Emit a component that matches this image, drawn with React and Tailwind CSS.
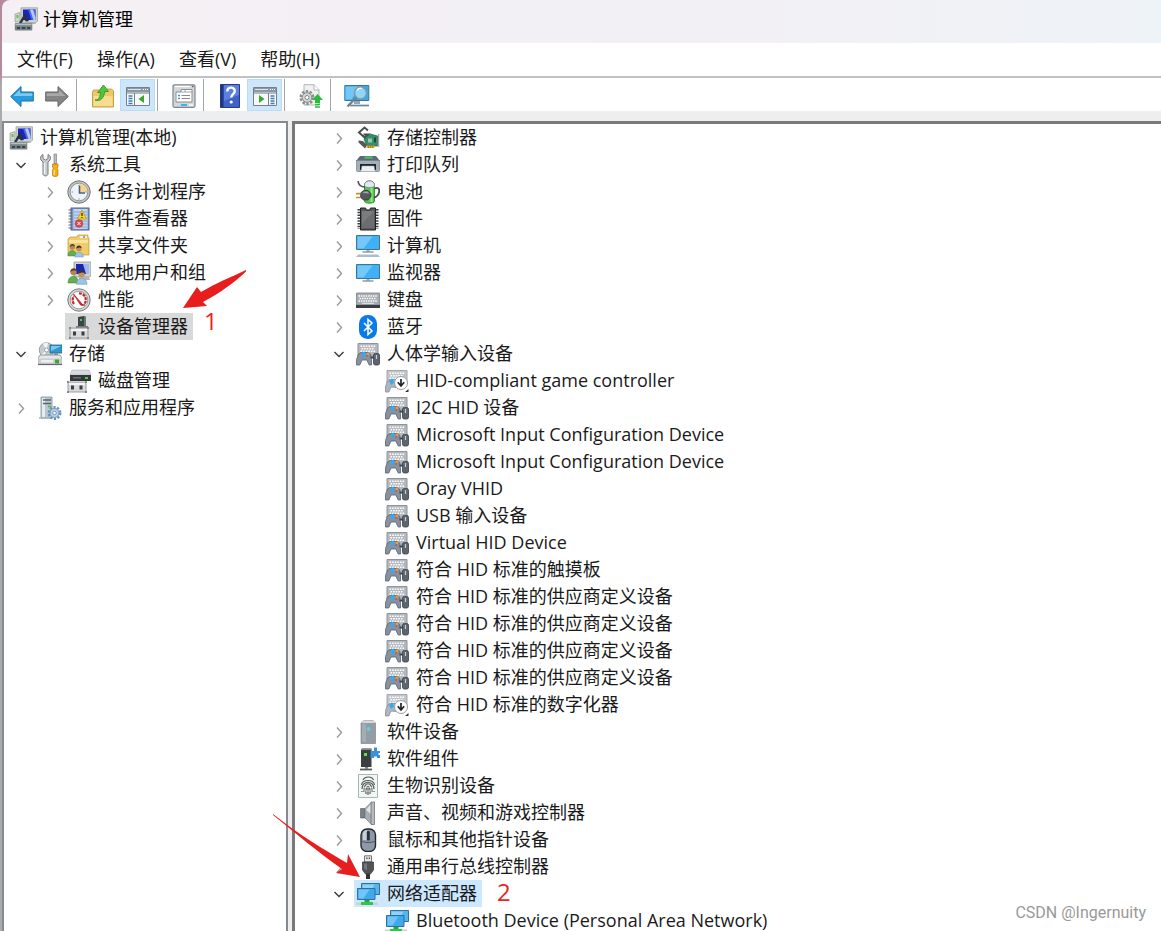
import React from "react";

function Svg({ children, size = "size-6", box = "0 0 24 24" }) {
  return (
    <svg viewBox={box} className={size + " shrink-0"} fill="none" aria-hidden="true">
      {children}
    </svg>
  );
}

/* ---------- tree icons ---------- */

function ManagementIcon() {
  return (
    <Svg>
      <path d="M7 .8h16.500v13.500L21 16H9L7 14z" fill="#cfd2cc" stroke="#979a95" strokeWidth=".7" />
      <path d="M9 2.500h12.500v10.500H9z" fill="#1625c4" />
      <path d="M14 2.500h7.500v10.500h-4z" fill="#4a68e2" />
      <path d="M16 2.500h3l2.500 8v2.500h-2z" fill="#b9c9fb" />
      <path d="M11 15h9l2 2H10z" fill="#aeb3ae" />
      <path d="M1 7l5-1.500V15H1z" fill="#ccd5ce" stroke="#8b958c" strokeWidth=".6" />
      <path d="M2.500 8h2v3h-2z" fill="#62c93a" />
      <path d="M10.500 6.500c2 0 3 2 2 3.500l2.500 4-3 .5-2-2-2.500 3.500H5l3.500-6z" fill="#2a3046" />
      <rect x=".8" y="16" width="17.500" height="7.500" rx="1" fill="#788485" />
      <path d="M1.500 16.700h16v1.500h-16z" fill="#b3c0c0" />
      <path d="M3 20h3v2H3zM7.800 20h3.500v2H7.800zM13.200 20h3v2h-3z" fill="#37424a" />
    </Svg>
  );
}

function ToolsIcon() {
  return (
    <Svg>
      <path d="M5 1.500C2.500 2.500 2 5 3 7l2 2v12c0 2.500 5 2.500 5 0V9l2-2c1-2 .5-4.500-2-5.500v4L7.500 7 5 5.500z" fill="#c8cbcd" stroke="#777b7e" />
      <path d="M6.500 10v11" stroke="#f4f5f5" strokeWidth="1.300" />
      <path d="M16 1h2.500v10H16z" fill="#b9bcc0" stroke="#707478" strokeWidth=".6" />
      <path d="M14.500 11h5.500v3l-1 1 1 2v5c0 2-5.500 2-5.500 0v-5l1-2-1-1z" fill="#f3ae18" stroke="#b97607" strokeWidth=".7" />
      <path d="M16.300 17v5" stroke="#ffe27a" strokeWidth="1.300" />
    </Svg>
  );
}

function ClockIcon() {
  return (
    <Svg>
      <circle cx="12" cy="12" r="11.200" fill="#bfc3c4" stroke="#73777a" />
      <circle cx="12" cy="12" r="8.800" fill="#eef4f9" stroke="#7f8487" strokeWidth=".8" />
      <path d="M12 12V3.500A8.500 8.500 0 0 1 20.500 12z" fill="#f6d48d" />
      <path d="M12 5v1M12 18.500v1M4.800 12h1M18.500 12h1" stroke="#667" />
      <path d="M12.500 6v7H18" stroke="#45617e" strokeWidth="1.600" />
    </Svg>
  );
}

function EventIcon() {
  return (
    <Svg>
      <rect x="4" y="1" width="18" height="22" fill="#7f9ccb" stroke="#4c5f92" />
      <rect x="6.500" y="2" width="14" height="20" fill="#c3d5ee" />
      <path d="M7 5h13M7 8h13M7 11h13M7 14h13M7 17h13M7 20h13" stroke="#8aa3d2" />
      <path d="M1.500 3h4M1.500 6h4M1.500 9h4M1.500 12h4M1.500 15h4M1.500 18h4M1.500 21h4" stroke="#5d6573" strokeWidth="1.200" />
      <path d="M15 3l4.500 9h-9z" fill="#f7d51d" stroke="#b79209" strokeWidth=".7" />
      <path d="M15 6v3M15 10v1" stroke="#222" strokeWidth="1.200" />
      <circle cx="12" cy="16.500" r="3.800" fill="#dd4a4c" stroke="#b33" strokeWidth=".6" />
      <path d="M10.500 15l3 3M13.500 15l-3 3" stroke="#fff" />
    </Svg>
  );
}

function People() {
  return (
    <g>
      <circle cx="6.500" cy="11" r="3.200" fill="#b98454" />
      <path d="M3.300 11c0-5 6.500-5 6.500-.5-2-1.500-4-1-6.500.5z" fill="#594231" />
      <path d="M1 22c0-9 10.500-9 10.500 0z" fill="#63ad55" stroke="#3c7a36" strokeWidth=".5" />
      <circle cx="14.500" cy="13" r="3.200" fill="#c4905f" />
      <path d="M11.300 13c0-5 6.500-5 6.500-.5-2-1.500-4-1-6.500.5z" fill="#3a2c24" />
      <path d="M9.500 23.300c0-8 10.500-8 10.500 0z" fill="#9cc4e4" stroke="#5c88ad" strokeWidth=".5" />
    </g>
  );
}

function SharedFolderIcon() {
  return (
    <Svg>
      <path d="M1 5l2-2h7l1-2h10v3h1v17H1z" fill="#f0cb6a" stroke="#c2973a" strokeWidth=".7" />
      <path d="M13 2.300h7v1.500h-7z" fill="#fff" />
      <path d="M16 2.300h2v1.500h-2z" fill="#4b8fd1" />
      <path d="M2 6h19v3H2z" fill="#fae3a0" />
      <g transform="translate(0 4) scale(.82)"><People /></g>
    </Svg>
  );
}

function UsersIcon() {
  return (
    <Svg>
      <path d="M7 1h17v14l-2 1H7z" fill="#cfd2cd" stroke="#8d918c" strokeWidth=".7" />
      <path d="M9 3h13v10H9z" fill="#1726b5" />
      <path d="M16 3h6v10h-3z" fill="#9fb7f6" />
      <path d="M12 16h10l1 3H12z" fill="#b4b8b3" />
      <People />
    </Svg>
  );
}

function PerformanceIcon() {
  return (
    <Svg>
      <circle cx="12" cy="12" r="11.200" fill="#d4d6d6" stroke="#777b7d" />
      <circle cx="12" cy="12" r="8.800" fill="#fbfbfb" stroke="#85898b" strokeWidth=".8" />
      <path d="M7 16A6.500 6.500 0 0 1 7 8M12 5.300a6.500 6.500 0 0 1 5 11" stroke="#c9252b" strokeWidth="2.200" strokeDasharray="3 .8" />
      <path d="M6.500 6l9.500 11-2.500 0z" fill="#d3202a" stroke="#ab1119" strokeWidth=".6" />
      <path d="M14 17h4" stroke="#c9252b" strokeWidth="1.500" />
    </Svg>
  );
}

function PlugBase() {
  return (
    <>
      <rect x="3" y="13" width="18" height="10" fill="#d9dadb" stroke="#9b9da0" />
      <path d="M4 14h16v2H4z" fill="#f2f2f2" />
      <path d="M6 16.500h3v4H6zM14.500 16.500h3v4h-3z" fill="#3b3e42" />
      <path d="M2 12h2v2H2zM20 12h2v2h-2zM2 22h2v2H2zM20 22h2v2h-2z" fill="#85888b" />
    </>
  );
}

function DeviceManagerIcon() {
  return (
    <Svg>
      <path d="M11 2l6-1 2 1v9h-8z" fill="#3e4348" />
      <path d="M17 1l2 1v9h-2z" fill="#6e7479" />
      <path d="M13 4h2v2h-2z" fill="#4fcf3b" />
      <path d="M9 11h12v2H9z" fill="#75797d" />
      <PlugBase />
    </Svg>
  );
}

function StorageIcon() {
  return (
    <Svg>
      <circle cx="8.500" cy="8" r="7.300" fill="#c4cbd0" stroke="#858e94" strokeWidth=".8" />
      <path d="M8.500 8L5 1.700A7 7 0 0 1 10 1z" fill="#f0f6f8" />
      <path d="M8.500 8L3 13a7 7 0 0 0 3 2z" fill="#f0f6f8" />
      <circle cx="8.500" cy="8" r="2" fill="#fff" stroke="#7f8b92" strokeWidth=".7" />
      <path d="M12 3h12v8H12z" fill="#3296cf" stroke="#1d668f" strokeWidth=".8" />
      <path d="M13 4h10l-10 5z" fill="#7cc8f2" />
      <path d="M16 11h4v2h-4z" fill="#8b959b" />
      <path d="M2 13h20l2 3v6H0v-6z" fill="#e4e7e8" stroke="#74797d" strokeWidth=".7" />
      <path d="M.5 16.500h23v6H.5z" fill="#c9cdcf" />
      <path d="M3 18h12v2.500H3z" fill="#eceeef" />
      <path d="M17 17.500h4v4h-4z" fill="#42a631" />
      <path d="M0 22.500h24" stroke="#63686b" strokeWidth="1.200" />
    </Svg>
  );
}

function DiskIcon() {
  return (
    <Svg>
      <path d="M5 1h17l2 5H3z" fill="#d8dbdd" stroke="#aeb2b5" strokeWidth=".6" />
      <path d="M3 6h21v6H3z" fill="#34383c" />
      <path d="M6 8h8v1.500H6z" fill="#6a6f74" />
      <path d="M18 8h3v2h-3z" fill="#4cce35" />
      <g transform="translate(-2 0)"><PlugBase /></g>
    </Svg>
  );
}

function ServicesIcon() {
  return (
    <Svg>
      <path d="M3 1h11v21H3z" fill="#bac7cf" stroke="#84929b" strokeWidth=".8" />
      <path d="M4 2h3v19H4z" fill="#e5ecf0" />
      <path d="M5 4h8M5 7.500h8" stroke="#58666f" strokeWidth="1.400" />
      <path d="M10 10.500h3" stroke="#53b744" strokeWidth="1.600" />
      <path d="M1 22h12" stroke="#a7b4bb" strokeWidth="1.500" />
      <circle cx="16.500" cy="17" r="5.800" stroke="#6993b8" strokeWidth="2.400" strokeDasharray="2.200 1.450" />
      <circle cx="16.500" cy="17" r="4.500" fill="#b9d2e7" stroke="#6d97bb" />
      <circle cx="16.500" cy="17" r="1.800" fill="#fff" stroke="#5c86ab" strokeWidth=".8" />
    </Svg>
  );
}

function StorageControllerIcon() {
  return (
    <Svg>
      <path d="M12 4.500L8.500 1.500 3 6.500l5.500 5L12 8.500H7.500" stroke="#4b4e50" strokeWidth="2" />
      <path d="M2.500 14.500l4.500.5 4 4-2 3.500-6.500-6z" fill="#55595b" />
      <path d="M8 13l6-5 7.500 2v10H11z" fill="#35906a" stroke="#1b5a3f" strokeWidth=".7" />
      <path d="M12 12.500h4v4h-4z" fill="#9cc5ad" />
      <path d="M18 11.500h2v5h-2z" fill="#174c37" />
      <path d="M22.500 8v13" stroke="#a4a8aa" strokeWidth="1.400" />
      <path d="M10.500 19.500h8V22h-8z" fill="#e0a52a" />
      <path d="M12.500 19.500V22M14.500 19.500V22M16.500 19.500V22" stroke="#8c6411" strokeWidth=".6" />
    </Svg>
  );
}

function PrinterIcon() {
  return (
    <Svg>
      <path d="M4 3h16l4 5H0z" fill="#606a72" />
      <path d="M9 3.500h7l1 2H8z" fill="#4cc46f" />
      <path d="M0 7.500h24v10l-1.500 1h-21L0 17.500z" fill="#a4b0b9" stroke="#737e87" strokeWidth=".7" />
      <path d="M4 11h16v6H4z" fill="#20272c" />
      <path d="M6 13h12l1 5.500H5z" fill="#edf0f2" stroke="#a5abb0" strokeWidth=".5" />
    </Svg>
  );
}

function BatteryIcon() {
  return (
    <Svg>
      <path d="M8.500 5c0-5.500 10-5.500 10 0v16c0 3-10 3-10 0z" fill="#50c64a" stroke="#2c7a2d" strokeWidth=".8" />
      <path d="M8.500 5c0-5.500 10-5.500 10 0v1.500c-3 1.500-7 1.500-10 0z" fill="#e3e6f3" stroke="#77808a" strokeWidth=".7" />
      <path d="M15.500 8v14" stroke="#93e886" strokeWidth="2" />
      <path d="M18.500 8.500c5-2 5 2 4.500 4s-2.500 5-5 5" stroke="#43484a" strokeWidth="1.800" />
      <path d="M2 1c.5 4 3 6 7 6" stroke="#4a4e50" strokeWidth="1.600" />
      <path d="M4.500 13l3-2.500h4.500l3 3v3L12 20H7.500l-3-2.500z" fill="#55595c" stroke="#222" strokeWidth=".6" />
      <path d="M6.500 13l2-1.500h3l2 2z" fill="#a2a8ac" />
      <path d="M0 13.700h4.500M0 17.500h4.500" stroke="#c09238" strokeWidth="1.700" />
    </Svg>
  );
}

function FirmwareIcon() {
  return (
    <Svg>
      <path d="M3 2v20M21 2v20" stroke="#3b3d3f" strokeWidth="3" strokeDasharray="1.500 1.300" />
      <path d="M4.500 1h5l1 2h3l1-2h5v22h-15z" fill="#58595a" stroke="#1f2021" />
      <path d="M6 4h12v17H6z" fill="#6c6d6e" />
      <path d="M6 4h12L6 17z" fill="#7b7c7d" />
    </Svg>
  );
}

function Screen({ base }) {
  return (
    <>
      <path d="M.5 1.500h23v14H.5z" fill="#41b0f5" stroke="#3c7797" />
      <path d="M1.500 2.500h15l-9 12h-6z" fill="#74c8fa" />
      <path d="M10.500 16h3v2h-3z" fill="#9badb8" />
      <path d="M6.500 18h11" stroke="#7f97a5" strokeWidth="1.400" />
      {base && <path d="M2 20.500h20l2 2.500H0z" fill="#aebdca" />}
    </>
  );
}

const ComputerIcon = () => <Svg><Screen base /></Svg>;
const MonitorIcon = () => <Svg><g transform="translate(0 2)"><Screen /></g></Svg>;

function KeyboardIcon() {
  return (
    <Svg>
      <path d="M.5 5h23v12H.5z" fill="#a8adb3" stroke="#7a8087" strokeWidth=".8" />
      <path d="M2.500 8h19M3.500 10.500h17M2.500 13h19" stroke="#fff" strokeWidth="1.400" strokeDasharray="1.500 .9" />
      <path d="M6 15.300h12" stroke="#e9ebed" />
      <path d="M0 17h24v3H0z" fill="#393d42" />
    </Svg>
  );
}

function BluetoothIcon() {
  return (
    <Svg>
      <rect x="3" y="0" width="18" height="24" rx="8.500" fill="#0a7bea" />
      <path d="M8 8l8 8-4 3.500v-15L16 8l-8 8" stroke="#fff" strokeWidth="1.500" />
    </Svg>
  );
}

function HidBase() {
  return (
    <>
      <path d="M2 1.500h20V14H2z" fill="#b4b9bf" stroke="#8d949b" />
      <path d="M4.500 4.300h15M5.500 6.800h13M4.500 9.300h15" stroke="#fff" strokeWidth="1.400" strokeDasharray="1.600 1" />
    </>
  );
}

function HidIcon() {
  return (
    <Svg>
      <HidBase />
      <path d="M2.500 12L5 10.500h7l2.500 1.500 1 5.500V23h-2.300l-2.400-5H6l-2.200 5H.5v-5.500z" fill="#8791a0" stroke="#59636f" strokeWidth=".8" />
      <path d="M5 11l3.500-1.500L10.500 13 7 15.500z" fill="#3ea6ea" />
      <circle cx="12" cy="11.800" r="1.300" fill="#f0a02c" />
      <circle cx="11.200" cy="14" r="1" fill="#d6543a" />
      <path d="M14.500 15.500h3.500" stroke="#3b444c" strokeWidth="2" />
      <rect x="17.500" y="11.500" width="6" height="11.500" rx="1.800" fill="#5c6670" stroke="#3a4249" strokeWidth=".8" />
      <path d="M20.500 13v4" stroke="#c7ced4" strokeWidth="1.200" />
    </Svg>
  );
}

function HidDisabledIcon() {
  return (
    <Svg>
      <g opacity=".8">
        <HidBase />
        <path d="M2.500 12L5 10.500h6v8L6 18l-2.200 5H.5v-5.500z" fill="#9ba4b0" stroke="#6b7580" strokeWidth=".8" />
      </g>
      <path d="M4 12l4-2.500 1 4-3 2.500z" fill="#3ea6ea" />
      <path d="M20 23l3.500-3v3z" fill="#333" />
      <circle cx="16" cy="14" r="6.500" fill="#fff" stroke="#999c9f" />
      <path d="M16 10v6.500M12.800 13.300l3.200 3.700 3.200-3.700" stroke="#222" strokeWidth="1.700" />
    </Svg>
  );
}

function SoftwareDeviceIcon() {
  return (
    <Svg>
      <path d="M5 3l3-2.500h9L19.500 3v20.500H5z" fill="#959da4" stroke="#747c83" strokeWidth=".6" />
      <path d="M5 3l3-2.500h9L19.500 3z" fill="#d5dade" />
      <path d="M6 4h4v18H6z" fill="#a5adb4" />
      <circle cx="12.500" cy="9" r="2" fill="#57d4e2" />
    </Svg>
  );
}

function SoftwareComponentIcon() {
  return (
    <Svg>
      <path d="M5 3l1-1.500h9.500V20H5z" fill="#3b3f42" />
      <path d="M5 3l1-1.500h9.500V3z" fill="#888d91" />
      <path d="M8 6h3v3H8z" fill="#5fe34b" />
      <path d="M4 22.500h12" stroke="#565b5f" strokeWidth="1.800" />
      <path d="M10.500 20v2" stroke="#888" strokeWidth="3" />
      <path d="M14.500 4H18V.5h3V4h3v2h-1.500v2H24v3h-3V9.500h-3V11h-3.500z" fill="#3a92d8" />
    </Svg>
  );
}

function FingerprintIcon() {
  return (
    <Svg>
      <path d="M2.500.5h19v23h-19z" fill="#f2f6f4" stroke="#a5b9b1" />
      <path d="M7 6c2-4 9-4 10.500 0M5.500 11c1-6 12-6 13 0M6 15c0-9 12-9 12 0M8 18c-1-11 9-11 8 0M10 20c-1-10 5-10 4 0M12 12v9M6 18v-1M18 18v-1" stroke="#52595a" strokeWidth="1.200" />
      <path d="M7 13.500h10M8 17h8" stroke="#f2f6f4" strokeWidth=".6" />
    </Svg>
  );
}

function SpeakerIcon() {
  return (
    <Svg>
      <path d="M4.500 7.500H9v9.500H4.500z" fill="#7b8084" stroke="#55595c" strokeWidth=".6" />
      <path d="M9 7.500L15.500 1v22.500L9 17z" fill="#a9aeb2" stroke="#777c80" strokeWidth=".7" />
      <path d="M10 9l5-6v10z" fill="#e2e5e7" />
      <path d="M15 1h3.500v22.500H15z" fill="#b5babd" stroke="#63686c" strokeWidth=".7" />
    </Svg>
  );
}

function MouseIcon() {
  return (
    <Svg>
      <rect x="5" y="1" width="14.500" height="22.500" rx="6" fill="#8d99a7" stroke="#22272c" strokeWidth="1.400" />
      <path d="M7 6c0-4 4-4 4-4v10H7z" fill="#c8d1da" />
      <path d="M5 13c4 2 10 2 14.500 0" stroke="#4b545e" />
      <rect x="10.800" y="3" width="3" height="9.500" rx="1.300" fill="#2c3136" />
    </Svg>
  );
}

function UsbIcon() {
  return (
    <Svg>
      <path d="M8.500.8h7V7h-7z" fill="#e4e4e4" stroke="#777" />
      <path d="M10.300 2.500h1.200V4h-1.200zM12.800 2.500H14V4h-1.200z" fill="#444" />
      <path d="M6.500 7h11v8l-3 4h-5l-3-4z" fill="#515355" stroke="#333" strokeWidth=".7" />
      <path d="M8 8.500h3v7l-3-2z" fill="#74777a" />
      <path d="M10 19h4v5h-4z" fill="#2f3133" />
    </Svg>
  );
}

function NetworkIcon() {
  return (
    <Svg>
      <path d="M5.500 1.500h18v11h-18z" fill="#55b5ef" stroke="#2f7197" />
      <path d="M6.500 2.500h12l-3 6h-9z" fill="#8ed2fa" />
      <path d="M1.500 6.500H19v11H1.500z" fill="#3fa9ed" stroke="#2f7197" />
      <path d="M2.500 7.500h11l-6 9h-5z" fill="#72c5f8" />
      <path d="M8.500 18h5v2.500h-5z" fill="#2aa341" />
      <path d="M0 20.500h22v2.500H0z" fill="#c9d2d4" />
      <path d="M5 20h12v3H5z" fill="#38c14b" />
    </Svg>
  );
}

/* ---------- toolbar icons ---------- */

function ArrowIcon({ forward }) {
  return (
    <Svg>
      {forward ? (
        <>
          <path d="M23.300 12.500L13 2.500V8H.7v9H13v5.500z" fill="#858585" stroke="#666" strokeLinejoin="round" />
          <path d="M14 5.500l6.500 6.500H1.700V9.300H14z" fill="#a8a8a8" />
        </>
      ) : (
        <>
          <path d="M.7 12.500L11 2.500V8h12.300v9H11v5.500z" fill="#279de0" stroke="#1b6faa" strokeLinejoin="round" />
          <path d="M10 5.500L3.500 12h18.800V9.300H10z" fill="#7bcbf5" />
        </>
      )}
    </Svg>
  );
}

function FolderUpIcon() {
  return (
    <Svg>
      <path d="M1.500 8l1-2h6l1 2h5l1-3h5l2 2v16h-21z" fill="#eec867" stroke="#b98f35" strokeWidth=".8" />
      <path d="M2.500 12h19v10h-19z" fill="#f8dd8f" />
      <path d="M4 16c4 0 5-3 5.500-7.500H6.500L12.500 1l5 6.500h-3.800C13 14 9.500 18 4 16z" fill="#4cc63a" stroke="#2b8f22" strokeWidth=".8" />
    </Svg>
  );
}

function PaneIcon({ right }) {
  return (
    <Svg>
      <path d="M.5 3.500h23v18H.5z" fill="#f7f8f9" stroke="#76808b" />
      <path d="M1 4h22v4H1z" fill="#8d98a5" />
      <path d="M2 5.500h13" stroke="#dfe4e9" />
      <path d="M17 5.500h5" stroke="#fff" strokeDasharray="1 1" />
      <path d="M1 9h22" stroke="#717b86" />
      {right ? (
        <>
          <path d="M15.500 9v12" stroke="#76808b" />
          <path d="M17.500 12h4M17.500 14.500h4M17.500 17h4M17.500 19.500h4" stroke="#3e7cb2" strokeWidth="1.300" />
          <path d="M6 11l5.500 4L6 19z" fill="#37a829" />
        </>
      ) : (
        <>
          <path d="M8.500 9v12" stroke="#76808b" />
          <path d="M2.500 12h4M2.500 14.500h4M2.500 17h4M2.500 19.500h4" stroke="#3e7cb2" strokeWidth="1.300" />
          <path d="M18 11l-5.500 4 5.500 4z" fill="#37a829" />
        </>
      )}
    </Svg>
  );
}

function PropertiesIcon() {
  return (
    <Svg>
      <rect x="1" y=".8" width="22" height="22.500" rx="1.500" fill="#d4d7da" stroke="#7f858b" strokeWidth="1.200" />
      <path d="M3 2.500h15" stroke="#fff" strokeWidth="1.300" />
      <path d="M20 2.500h1.500" stroke="#666" strokeWidth="1.300" />
      <path d="M4 8h5V5.500h11V18H4z" fill="#fff" stroke="#7d848b" strokeWidth=".9" />
      <path d="M9 8h4V5.500M13 8h7" stroke="#8a9097" strokeWidth=".8" />
      <path d="M6 11.500h2M6 14.500h2" stroke="#379ad1" strokeWidth="1.500" />
      <path d="M9.500 11.500H18M9.500 14.500H18" stroke="#858b91" strokeWidth="1.200" />
      <path d="M9 20h6v2H9z" fill="#3fb3e5" />
      <path d="M17 20h4v2h-4z" fill="#f1f2f3" />
    </Svg>
  );
}

function HelpIcon() {
  return (
    <Svg>
      <path d="M2.500.5h19v23h-19z" fill="#3f62c8" stroke="#243b86" />
      <path d="M3 1h2.500v22H3z" fill="#1e3680" />
      <path d="M6 1h15v10L6 17z" fill="#5a7fdd" />
      <path d="M9.300 7.500c0-5.200 7.500-4.800 7.500-.6 0 3.300-3.600 3.200-3.600 6.700" stroke="#fff" strokeWidth="2.400" />
      <circle cx="13.200" cy="18" r="1.600" fill="#fff" />
    </Svg>
  );
}

function UpdateDriverIcon() {
  return (
    <Svg>
      <path d="M5 .7h10l5 5V21H5z" fill="#f1f1f1" stroke="#adadad" strokeWidth=".9" />
      <path d="M15 .7V6h5" fill="#fff" stroke="#adadad" strokeWidth=".9" />
      <circle cx="8" cy="13.500" r="6.300" stroke="#8b8e90" strokeWidth="2.400" strokeDasharray="2.500 1.450" />
      <circle cx="8" cy="13.500" r="4.800" fill="#d2d4d5" stroke="#85898b" />
      <circle cx="8" cy="13.500" r="2" fill="#fff" stroke="#85898b" />
      <path d="M18.500 10l5.500 6h-3v3h-5v-3h-3z" fill="#29bb3a" />
      <path d="M16 20.500h5M16 23h5" stroke="#29bb3a" strokeWidth="1.500" />
    </Svg>
  );
}

function ScanIcon() {
  return (
    <Svg size="h-6 w-[26px]" box="0 0 26 24">
      <path d="M.8 1.500h24v15H.8z" fill="#3ba8e8" stroke="#2c7ba6" />
      <path d="M1.500 2.500h14l-8 13h-6z" fill="#72c7f6" />
      <path d="M10 17h6v3h-6z" fill="#95a8b3" />
      <path d="M6 21.500h19" stroke="#6e8796" strokeWidth="1.700" />
      <circle cx="16.500" cy="9" r="6" fill="#a5dcf8" fillOpacity=".85" stroke="#8297a4" strokeWidth="1.500" />
      <path d="M13 6.500c1-2 3-3 5-2" stroke="#fff" strokeWidth="1.300" />
      <path d="M12.300 13.500L3.500 22.500" stroke="#71828c" strokeWidth="2.400" />
    </Svg>
  );
}

/* ---------- data ---------- */

const consoleTree = {
  label: "计算机管理(本地)",
  icon: ManagementIcon,
  children: [
    {
      label: "系统工具",
      icon: ToolsIcon,
      open: true,
      children: [
        { label: "任务计划程序", icon: ClockIcon, open: false },
        { label: "事件查看器", icon: EventIcon, open: false },
        { label: "共享文件夹", icon: SharedFolderIcon, open: false },
        { label: "本地用户和组", icon: UsersIcon, open: false },
        { label: "性能", icon: PerformanceIcon, open: false },
        { label: "设备管理器", icon: DeviceManagerIcon, tone: "bg-[#d9d9d9]" },
      ],
    },
    {
      label: "存储",
      icon: StorageIcon,
      open: true,
      children: [{ label: "磁盘管理", icon: DiskIcon }],
    },
    { label: "服务和应用程序", icon: ServicesIcon, open: false },
  ],
};

const devices = [
  { label: "存储控制器", icon: StorageControllerIcon, open: false },
  { label: "打印队列", icon: PrinterIcon, open: false },
  { label: "电池", icon: BatteryIcon, open: false },
  { label: "固件", icon: FirmwareIcon, open: false },
  { label: "计算机", icon: ComputerIcon, open: false },
  { label: "监视器", icon: MonitorIcon, open: false },
  { label: "键盘", icon: KeyboardIcon, open: false },
  { label: "蓝牙", icon: BluetoothIcon, open: false },
  {
    label: "人体学输入设备",
    icon: HidIcon,
    open: true,
    children: [
      { label: "HID-compliant game controller", icon: HidDisabledIcon },
      { label: "I2C HID 设备", icon: HidIcon },
      { label: "Microsoft Input Configuration Device", icon: HidIcon },
      { label: "Microsoft Input Configuration Device", icon: HidIcon },
      { label: "Oray VHID", icon: HidIcon },
      { label: "USB 输入设备", icon: HidIcon },
      { label: "Virtual HID Device", icon: HidIcon },
      { label: "符合 HID 标准的触摸板", icon: HidIcon },
      { label: "符合 HID 标准的供应商定义设备", icon: HidIcon },
      { label: "符合 HID 标准的供应商定义设备", icon: HidIcon },
      { label: "符合 HID 标准的供应商定义设备", icon: HidIcon },
      { label: "符合 HID 标准的供应商定义设备", icon: HidIcon },
      { label: "符合 HID 标准的数字化器", icon: HidDisabledIcon },
    ],
  },
  { label: "软件设备", icon: SoftwareDeviceIcon, open: false },
  { label: "软件组件", icon: SoftwareComponentIcon, open: false },
  { label: "生物识别设备", icon: FingerprintIcon, open: false },
  { label: "声音、视频和游戏控制器", icon: SpeakerIcon, open: false },
  { label: "鼠标和其他指针设备", icon: MouseIcon, open: false },
  { label: "通用串行总线控制器", icon: UsbIcon, open: false },
  {
    label: "网络适配器",
    icon: NetworkIcon,
    open: true,
    tone: "bg-[#cce8ff]",
    children: [{ label: "Bluetooth Device (Personal Area Network)", icon: NetworkIcon }],
  },
];

/* ---------- tree ---------- */

function NodeLabel({ node }) {
  const Icon = node.icon;
  return (
    <span className={"flex h-full items-center gap-[7px] pr-[5px] pl-0.5 whitespace-nowrap " + (node.tone || "")}>
      <Icon />
      <span>{node.label}</span>
    </span>
  );
}

function Expander({ node }) {
  if (node.open === undefined) return <span className="w-8 shrink-0" />;
  return (
    <button
      type="button"
      aria-label={(node.open ? "折叠 " : "展开 ") + node.label}
      className="flex h-full w-8 shrink-0 items-center justify-center pt-px pl-0.5"
    >
      <svg viewBox="0 0 12 12" className="size-3" fill="none" strokeWidth="1.4" aria-hidden="true">
        {node.open ? <path d="M1.500 4L6 8.500 10.500 4" stroke="#3b3b3b" /> : <path d="M4 1.500L8.500 6.500 4 11.500" stroke="#9a9a9a" />}
      </svg>
    </button>
  );
}

function TreeNode({ node }) {
  return (
    <li role="treeitem" aria-expanded={node.open} aria-selected={Boolean(node.tone)}>
      <div className="flex h-[27px] items-center">
        <Expander node={node} />
        <NodeLabel node={node} />
      </div>
      {node.children && (
        <ul role="group" className="pl-[29px]">
          {node.children.map((child, i) => <TreeNode key={i} node={child} />)}
        </ul>
      )}
    </li>
  );
}

/* ---------- window chrome ---------- */

function ToolButton({ label, active, children }) {
  return (
    <button
      type="button"
      aria-label={label}
      aria-pressed={active}
      className={"flex w-[35px] items-center justify-center border pt-px " + (active ? "border-[#bcdcf4] bg-[#cce6fb]" : "border-transparent")}
    >
      {children}
    </button>
  );
}

const Separator = () => <span className="mr-2 ml-0.5 w-px bg-[#a3a6a9]" />;

export default function App() {
  return (
    <div
      lang="zh-CN"
      className="relative flex h-screen flex-col overflow-hidden bg-linear-to-b from-[#b58a9d] from-8% to-[#a9abad] to-9% pl-[2px] font-['Open_Sans','Noto_Sans_CJK_SC',sans-serif] text-lg leading-[27px] text-[#1a1a1a]"
    >
      <header className="flex h-[43px] shrink-0 items-center gap-[5px] rounded-tl-lg bg-linear-to-r from-[#f4f0f4] via-[#f3f0f5] via-60% to-[#eef3f7] pb-[5px] pl-3 text-black">
        <ManagementIcon />
        <h1>计算机管理</h1>
      </header>

      <nav aria-label="菜单" className="flex h-[35px] shrink-0 items-center border-b-2 border-[#c0c3c5] bg-white pl-[3px]">
        {["文件(F)", "操作(A)", "查看(V)", "帮助(H)"].map((m) => (
          <button key={m} type="button" className="px-3">{m}</button>
        ))}
      </nav>

      <div role="toolbar" aria-label="工具栏" className="flex h-[33px] shrink-0 bg-white pt-px pl-0.5">
        <ToolButton label="后退"><ArrowIcon /></ToolButton>
        <ToolButton label="前进"><ArrowIcon forward /></ToolButton>
        <Separator />
        <ToolButton label="上移一级"><FolderUpIcon /></ToolButton>
        <ToolButton label="显示/隐藏控制台树" active><PaneIcon /></ToolButton>
        <Separator />
        <ToolButton label="属性"><PropertiesIcon /></ToolButton>
        <Separator />
        <ToolButton label="帮助"><HelpIcon /></ToolButton>
        <ToolButton label="显示/隐藏操作窗格" active><PaneIcon right /></ToolButton>
        <Separator />
        <ToolButton label="更新驱动程序"><UpdateDriverIcon /></ToolButton>
        <Separator />
        <ToolButton label="扫描检测硬件改动"><ScanIcon /></ToolButton>
      </div>

      <main className="flex min-h-0 grow gap-1 bg-[#eeeeee] pt-2.5">
        <section aria-label="控制台树" className="w-[286px] shrink-0 overflow-hidden border-2 border-b-0 border-[#868b92] bg-white pt-px">
          <ul role="tree">
            <li role="treeitem" aria-expanded="true">
              <div className="flex h-[27px] items-center pl-[3px]">
                <NodeLabel node={consoleTree} />
              </div>
              <ul role="group">
                {consoleTree.children.map((n) => <TreeNode key={n.label} node={n} />)}
              </ul>
            </li>
          </ul>
        </section>
        <section aria-label="设备" className="min-w-0 grow overflow-hidden border-t-[3px] border-l-[3px] border-[#77797b] bg-white pl-[27px]">
          <ul role="tree">
            {devices.map((n) => <TreeNode key={n.label} node={n} />)}
          </ul>
        </section>
      </main>

      <svg viewBox="0 0 64 38" className="absolute top-[270px] left-[183px] w-16" fill="#e81d1d" aria-hidden="true">
        <path d="M0 38L14 17l4 5C33 13 48 7 63 0v1.500C52 12 37 23 20 32l4 4z" />
      </svg>
      <span className="absolute top-[311px] left-[204px] text-2xl leading-5 text-[#ee1f23]">1</span>
      <svg viewBox="0 0 88 63" className="absolute top-[814px] left-[272px] w-[88px]" fill="#e81d1d" aria-hidden="true">
        <path d="M88 63L76 40l-1 9C54 37 26 20 1 0l0 1c21 17 46 38 69 54l-6 4z" />
      </svg>
      <span className="absolute top-[882px] left-[497px] text-2xl leading-5 text-[#ee1f23]">2</span>
      <span className="absolute right-[15px] bottom-1.5 font-['Roboto',sans-serif] text-base leading-6 text-[#999]">CSDN @Ingernuity</span>
    </div>
  );
}
